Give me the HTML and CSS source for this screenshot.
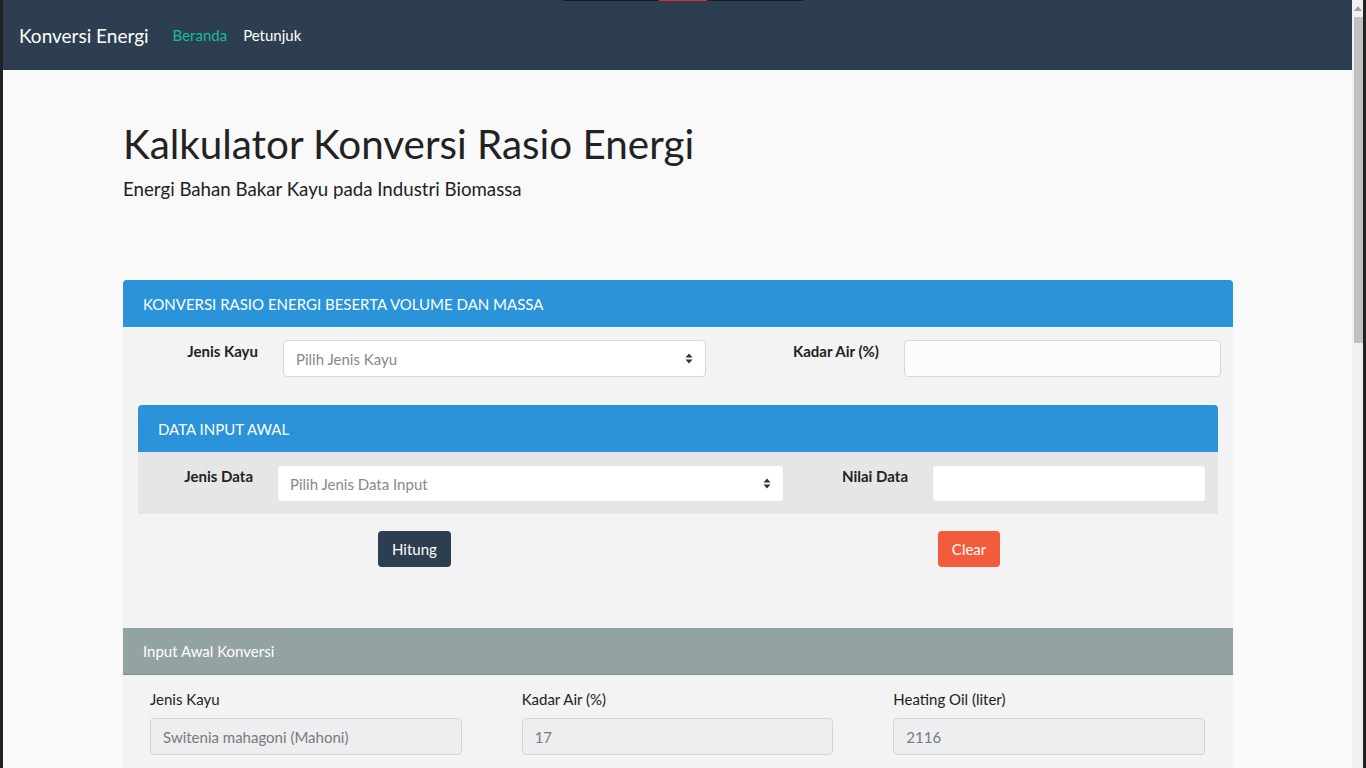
FILE: index.html
```html
<!DOCTYPE html>
<html lang="id">
<head>
<meta charset="utf-8">
<title>Konversi Energi</title>
<link rel="stylesheet" href="styles.css">
</head>
<body>
<div class="frame">
  <div class="edge"></div>
  <div class="page">
    <nav class="navbar">
      <a class="brand" href="#">Konversi Energi</a>
      <a class="nav-link active" href="#">Beranda</a>
      <a class="nav-link" href="#">Petunjuk</a>
      <div class="top-strip"><span class="seg"></span></div>
    </nav>
    <main class="container">
      <header class="jumbo">
        <h1>Kalkulator Konversi Rasio Energi</h1>
        <p class="lead">Energi Bahan Bakar Kayu pada Industri Biomassa</p>
      </header>

      <section class="panel">
        <div class="panel-heading blue">KONVERSI RASIO ENERGI BESERTA VOLUME DAN MASSA</div>
        <div class="panel-body">
          <div class="form-row outer">
            <label class="lbl">Jenis Kayu</label>
            <div class="select"><span>Pilih Jenis Kayu</span>
              <svg class="caret" width="8" height="11" viewBox="0 0 8 11"><path d="M4 0.5 L7.5 4.5 H0.5 Z M4 10.5 L7.5 6.5 H0.5 Z" fill="#333"/></svg>
            </div>
            <label class="lbl">Kadar Air (%)</label>
            <div class="input"></div>
          </div>

          <section class="panel inner">
            <div class="panel-heading blue">DATA INPUT AWAL</div>
            <div class="panel-body gray">
              <div class="form-row innerrow">
                <label class="lbl">Jenis Data</label>
                <div class="select"><span>Pilih Jenis Data Input</span>
                  <svg class="caret" width="8" height="11" viewBox="0 0 8 11"><path d="M4 0.5 L7.5 4.5 H0.5 Z M4 10.5 L7.5 6.5 H0.5 Z" fill="#333"/></svg>
                </div>
                <label class="lbl">Nilai Data</label>
                <div class="input white"></div>
              </div>
            </div>
          </section>

          <div class="buttons">
            <button class="btn btn-dark">Hitung</button>
            <button class="btn btn-danger">Clear</button>
          </div>
        </div>

        <div class="panel-heading slate">Input Awal Konversi</div>
        <div class="panel-body result">
          <div class="field">
            <div class="flabel">Jenis Kayu</div>
            <div class="dis">Switenia mahagoni (Mahoni)</div>
          </div>
          <div class="field">
            <div class="flabel">Kadar Air (%)</div>
            <div class="dis">17</div>
          </div>
          <div class="field">
            <div class="flabel">Heating Oil (liter)</div>
            <div class="dis">2116</div>
          </div>
        </div>
      </section>
    </main>
  </div>
  <div class="scrollbar">
    <div class="sb-up"><svg width="8" height="5" viewBox="0 0 8 5"><path d="M0 5 L4 0 L8 5 Z" fill="#a0a0a0"/></svg></div>
    <div class="sb-thumb"></div>
  </div>
  <div class="edge right"></div>
</div>
</body>
</html>
```

FILE: styles.css
```css
* { box-sizing: border-box; }
html, body { margin: 0; padding: 0; height: 768px; overflow: hidden; }
body {
  font-family: Lato, "Open Sans", Arial, sans-serif;
  font-size: 15px;
  color: #2c3e50;
  background: #222;
}
.frame { display: flex; height: 768px; }
.edge { width: 3px; background: #222; flex: none; }
.page { flex: 1; background: #f9f9f9; overflow: hidden; position: relative; }

.navbar {
  height: 70px;
  background: #2c3e50;
  display: flex;
  align-items: center;
  padding-left: 16px;
  position: relative;
}
.top-strip {
  position: absolute;
  top: 0;
  left: 560px;
  width: 240px;
  height: 1px;
  background: #1d1d1d;
}
.top-strip .seg {
  position: absolute;
  left: 96px;
  width: 48px;
  height: 1px;
  background: #d62c2c;
}
.brand {
  color: #fff;
  text-decoration: none;
  font-size: 19px;
  margin-right: 24px;
}
.nav-link {
  color: #fff;
  text-decoration: none;
  font-size: 15px;
  margin-right: 16px;
}
.nav-link.active { color: #18bc9c; }

.container { margin-left: 120px; width: 1110px; }
.jumbo { padding-top: 48px; padding-bottom: 78px; }
.jumbo h1 {
  margin: 0;
  font-size: 40.4px;
  font-weight: 400;
  color: #222;
  line-height: 52px;
}
.jumbo .lead {
  margin: 6px 0 0;
  font-size: 18.7px;
  color: #222;
  line-height: 26px;
}

.panel { border-radius: 4px 4px 0 0; }
.panel-heading {
  height: 47px;
  display: flex;
  align-items: center;
  padding-left: 20px;
  color: #fff;
  font-size: 15px;
}
.panel-heading.blue { background: #2a93d9; border-radius: 4px 4px 0 0; }
.panel-heading.slate { background: #93a2a3; border-bottom: 1px solid #7f8c8d; }
.panel-body { background: #f3f3f3; }

.form-row { display: grid; align-items: start; }
.form-row.outer {
  grid-template-columns: 160px 423px 198px 317px;
  padding: 13px 12px 28px 0;
}
.form-row.innerrow {
  grid-template-columns: 139px 507px 148px 274px;
  padding: 13px 12px 12px 0;
}
.lbl {
  text-align: right;
  padding-right: 25px;
  font-weight: 700;
  color: #222;
  line-height: 21px;
  padding-top: 1px;
}
.innerrow .lbl { padding-right: 24px; }
.select, .input {
  height: 37px;
  background: #fff;
  border: 1px solid #d6d6dc;
  border-radius: 4px;
  display: flex;
  align-items: center;
  justify-content: space-between;
  padding: 0 12px;
  color: #888;
  font-size: 15px;
}
.input { background: #fcfcfd; }
.innerrow .select, .innerrow .input { border-color: #e3e3e3; background: #fff; }

.inner { margin: 0 15px; }
.panel-body.gray { background: #e6e6e6; }

.buttons {
  display: flex;
  padding: 17px 0 61px 255px;
}
.btn {
  height: 36px;
  border: none;
  border-radius: 4px;
  color: #fff;
  font-family: Lato, Arial, sans-serif;
  font-size: 15px;
  padding: 0 14px;
}
.btn-dark { background: #2c3e50; }
.btn-danger { background: #f25b3b; margin-left: 487px; padding: 0 14px; }

.result {
  display: grid;
  grid-template-columns: repeat(3, 311.67px);
  column-gap: 60px;
  padding: 14px 28px 20px 27px;
}
.flabel {
  color: #222;
  line-height: 21px;
  margin-bottom: 8px;
}
.dis {
  height: 37px;
  background: #eceeef;
  border: 1px solid #d0d6d8;
  border-radius: 4px;
  padding: 0 12px;
  display: flex;
  align-items: center;
  color: #7a7a7a;
}

.scrollbar { width: 11px; background: #f1f1f1; flex: none; display: flex; flex-direction: column; align-items: flex-end; }
.sb-up { height: 17px; width: 11px; display: flex; align-items: center; justify-content: center; }
.sb-thumb { width: 9px; height: 326px; background: #c1c1c1; }
.edge.right { width: 3px; }
```
